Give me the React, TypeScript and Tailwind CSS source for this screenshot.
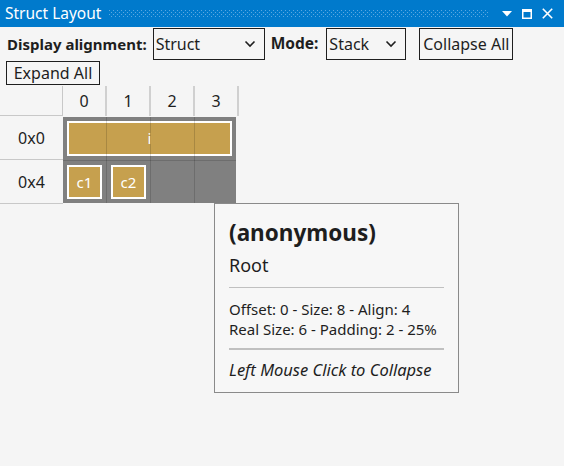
import React from 'react';

function ChevronDown() {
  return (
    <svg width="12" height="8" viewBox="0 0 12 8" className="shrink-0">
      <path d="M1.5 1.5 L6 6 L10.5 1.5" fill="none" stroke="#1e1e1e" strokeWidth="1.6" />
    </svg>
  );
}

function Select({ value, width }: { value: string; width: string }) {
  return (
    <div className={`${width} h-[32px] border border-[#1e1e1e] flex items-center justify-between pl-[2px] pr-[8px] text-[16px] text-[#1e1e1e]`}>
      <span>{value}</span>
      <ChevronDown />
    </div>
  );
}

function TitleBar() {
  return (
    <div className="h-[27px] bg-[#007acc] flex items-center pl-[5px] pr-[11px] text-white">
      <span className="text-[15.5px] leading-none">Struct Layout</span>
      <svg className="ml-[8px] w-[379px] h-[7px]" viewBox="0 0 379 7">
        <defs>
          <pattern id="grip" width="4" height="4" patternUnits="userSpaceOnUse">
            <rect x="0" y="0" width="1" height="1" fill="#5aa8e0" />
            <rect x="2" y="2" width="1" height="1" fill="#5aa8e0" />
          </pattern>
        </defs>
        <rect width="379" height="7" fill="url(#grip)" />
      </svg>
      <div className="flex items-center ml-auto gap-[10px]">
        <svg width="10" height="6" viewBox="0 0 10 6">
          <path d="M0 0 H10 L5 5.5 Z" fill="white" />
        </svg>
        <svg width="10" height="10" viewBox="0 0 10 10">
          <rect x="0.75" y="0.75" width="8.5" height="8.5" fill="none" stroke="white" strokeWidth="1.5" />
          <rect x="0" y="0" width="10" height="3" fill="white" />
        </svg>
        <svg width="11" height="11" viewBox="0 0 11 11">
          <path d="M0.8 0.8 L10.2 10.2 M10.2 0.8 L0.8 10.2" stroke="white" strokeWidth="1.6" />
        </svg>
      </div>
    </div>
  );
}

function Block({ label, className }: { label: string; className: string }) {
  return (
    <div className={`absolute border-2 border-white bg-[#c6a04e] text-white text-[15px] flex items-center justify-center ${className}`}>
      {label}
    </div>
  );
}

export default function App() {
  const cols = ['0', '1', '2', '3'];

  return (
    <div
      className="w-[564px] h-[466px] bg-[#f5f5f5] text-[#1e1e1e] relative overflow-hidden"
      style={{ fontFamily: '"Noto Sans", "Open Sans", sans-serif' }}
    >
      <TitleBar />

      <div className="flex flex-wrap items-center pl-[6px] pt-[1px]">
        <span className="font-bold text-[15px] ml-[1px] mr-[6px]">Display alignment:</span>
        <Select value="Struct" width="w-[112px]" />
        <span className="font-bold text-[15.5px] ml-[6px] mr-[8px]">Mode:</span>
        <Select value="Stack" width="w-[80px]" />
        <div className="ml-[13px] h-[32px] w-[94px] border border-[#1e1e1e] flex items-center justify-center text-[16px]">
          Collapse All
        </div>
        <div className="basis-full h-[1px]" />
        <div className="h-[24px] w-[94px] border border-[#1e1e1e] flex items-center justify-center text-[16px]">
          Expand All
        </div>
      </div>

      <div className="mt-[1px]">
        <div className="flex h-[30px]">
          <div className="w-[63px] border-r border-b border-[#c8c8c8]" />
          {cols.map(c => (
            <div key={c} className="w-[44px] border-r-2 border-[#d0d0d0] flex items-center justify-center text-[16px]">
              {c}
            </div>
          ))}
        </div>

        <div className="flex">
          <div className="w-[63px]">
            <div className="h-[44px] border-b border-[#c8c8c8] flex items-center justify-center text-[16px]">0x0</div>
            <div className="h-[44px] border-b border-[#c8c8c8] flex items-center justify-center text-[16px]">0x4</div>
          </div>
          <div className="relative mt-[1px] w-[173px] h-[86px] bg-[#808080]">
            <Block label="i" className="left-[4px] top-[4px] w-[165px] h-[35px]" />
            <Block label="c1" className="left-[4px] top-[48px] w-[35px] h-[34px]" />
            <Block label="c2" className="left-[48px] top-[48px] w-[35px] h-[34px]" />
            <div className="absolute left-[43px] top-0 w-[1px] h-full bg-black/15" />
            <div className="absolute left-[87px] top-0 w-[1px] h-full bg-black/15" />
            <div className="absolute left-[131px] top-0 w-[1px] h-full bg-black/15" />
            <div className="absolute left-0 top-[43px] w-full h-[1px] bg-black/15" />
          </div>
        </div>
      </div>

      <div className="absolute left-[214px] top-[203px] w-[245px] h-[190px] bg-[#f7f7f7] border border-[#8a8a8a] px-[14px] pt-[15px]">
        <div className="font-bold text-[22.5px] leading-[28px]">(anonymous)</div>
        <div className="text-[18px] leading-[24px] mt-[6px]">Root</div>
        <div className="h-[1px] bg-[#c0c0c0] mt-[10px]" />
        <div className="text-[15px] leading-[20px] mt-[11px] whitespace-nowrap">
          <div>Offset: 0 - Size: 8 - Align: 4</div>
          <div>Real Size: 6 - Padding: 2 - 25%</div>
        </div>
        <div className="h-[2px] bg-[#c0c0c0] mt-[9px]" />
        <div className="italic text-[16.5px] leading-[20px] mt-[10px] whitespace-nowrap">Left Mouse Click to Collapse</div>
      </div>
    </div>
  );
}
